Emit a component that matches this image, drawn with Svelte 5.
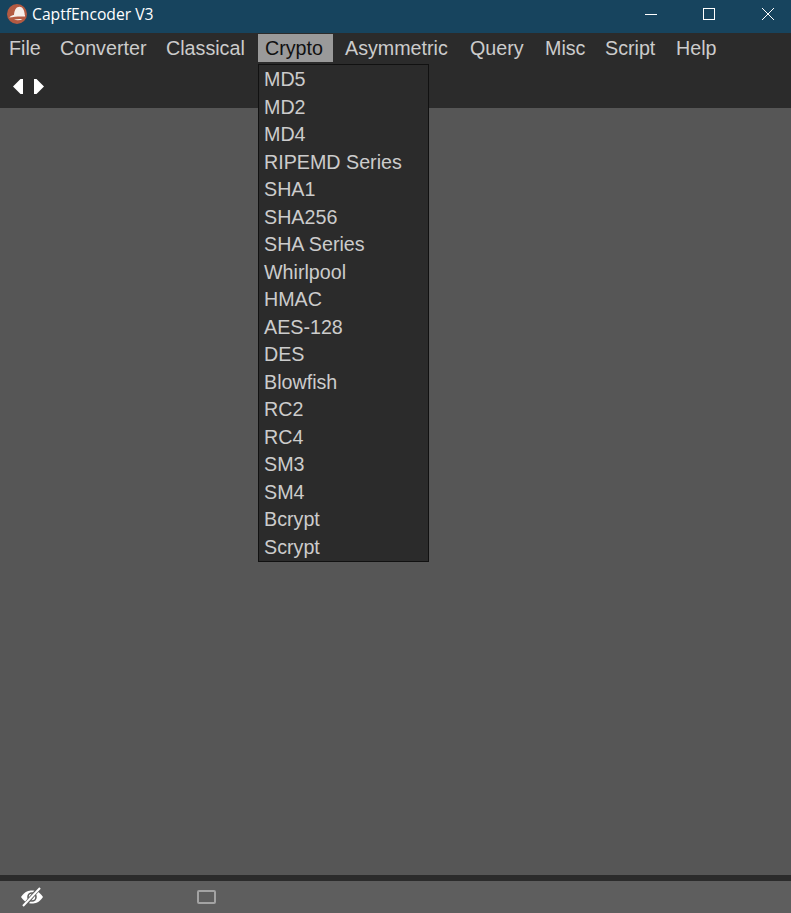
<script>
  const menus = [
    { name: 'File', width: 51 },
    { name: 'Converter', width: 106 },
    { name: 'Classical', width: 99 },
    { name: 'Crypto', width: 80 },
    { name: 'Asymmetric', width: 125 },
    { name: 'Query', width: 75 },
    { name: 'Misc', width: 60 },
    { name: 'Script', width: 71 },
    { name: 'Help', width: 60 }
  ]
  const cryptoItems = ['MD5', 'MD2', 'MD4', 'RIPEMD Series', 'SHA1', 'SHA256', 'SHA Series', 'Whirlpool', 'HMAC', 'AES-128', 'DES', 'Blowfish', 'RC2', 'RC4', 'SM3', 'SM4', 'Bcrypt', 'Scrypt']
  let active = 'Crypto'
</script>

<div class="window">
  <header class="titlebar">
    <svg class="logo" width="20" height="20" viewBox="0 0 20 20">
      <circle cx="10" cy="10" r="10" fill="#b35a42" />
      <path d="M7 10.5 C7.5 5.5 9.5 2.8 12.5 2.8 C15.5 2.8 17.5 6 17.8 11.5 L7 11.5 Z" fill="#f6eeea" />
      <path d="M2.2 13.6 C4 11.6 6 11 8 11 L18 11 L18 12.6 C13 12.2 7 12.6 2.2 13.6 Z" fill="#f6eeea" />
      <path d="M7 15.6 C10 14.8 13 14.8 15.5 15.2 C13 16.4 9.5 16.4 7 15.6 Z" fill="#f6eeea" />
    </svg>
    <span class="title">CaptfEncoder V3</span>
    <div class="controls">
      <svg width="12" height="12" viewBox="0 0 12 12"><path d="M0 6.5 H12" stroke="#fff" stroke-width="1" /></svg>
      <svg width="12" height="12" viewBox="0 0 12 12"><rect x="0.5" y="0.5" width="11" height="11" fill="none" stroke="#fff" stroke-width="1" /></svg>
      <svg class="close" width="12" height="12" viewBox="0 0 12 12"><path d="M0 0 L12 12 M12 0 L0 12" stroke="#fff" stroke-width="1" /></svg>
    </div>
  </header>

  <div class="top">
    <nav class="menubar">
      {#each menus as menu}
        <div class="menu" class:active={menu.name === active} style="width: {menu.width}px">{menu.name}</div>
      {/each}
    </nav>
    <div class="arrows">
      <svg width="10" height="15" viewBox="0 0 10 15"><path d="M10 0 V15 H7.5 L0 7.5 L7.5 0 Z" fill="#fff" /></svg>
      <svg width="10" height="15" viewBox="0 0 10 15"><path d="M0 0 V15 H2.5 L10 7.5 L2.5 0 Z" fill="#fff" /></svg>
    </div>
    <ul class="dropdown">
      {#each cryptoItems as item}
        <li>{item}</li>
      {/each}
    </ul>
  </div>

  <main class="content"></main>

  <footer class="statusbar">
    <svg class="eye" width="24" height="20" viewBox="0 0 24 20">
      <path d="M1 10 C5 4 9 3.5 12 3.5 C15 3.5 19 4 23 10 C19 16 15 16.5 12 16.5 C9 16.5 5 16 1 10 Z" fill="#fff" />
      <circle cx="12" cy="10" r="4" fill="none" stroke="#5e5e5e" stroke-width="1.6" />
      <path d="M20 0 L4 19" stroke="#5e5e5e" stroke-width="4" />
      <path d="M20 1 L3 19" stroke="#fff" stroke-width="2" />
    </svg>
    <span class="panel-toggle"></span>
  </footer>
</div>

<style>
  :global(body) {
    margin: 0;
  }

  .window {
    display: flex;
    flex-direction: column;
    height: 913px;
    background: #565656;
    font-family: "Liberation Sans", Arial, sans-serif;
  }

  .titlebar {
    display: flex;
    align-items: flex-start;
    height: 33px;
    box-sizing: border-box;
    padding: 4px 0 0 7px;
    background: #17445e;
    color: #fff;
  }

  .logo {
    margin-right: 5px;
  }

  .title {
    font-family: "Open Sans", sans-serif;
    font-size: 15.7px;
    line-height: 21px;
  }

  .controls {
    display: flex;
    gap: 46px;
    margin-left: auto;
    margin-right: 17px;
    margin-top: 4px;
  }

  .close {
    margin-left: 1px;
  }

  .top {
    position: relative;
    height: 75px;
    background: #2b2b2b;
  }

  .menubar {
    display: flex;
    padding: 1px 0 0 2px;
  }

  .menu {
    box-sizing: border-box;
    height: 28px;
    padding-left: 7px;
    font-size: 19.7px;
    line-height: 28px;
    color: #cccccc;
  }

  .menu.active {
    background: #9a9a9a;
    color: #111;
    width: 75px !important;
    margin-right: 5px;
  }

  .arrows {
    display: flex;
    gap: 11px;
    padding: 17px 0 0 13px;
  }

  .dropdown {
    position: absolute;
    left: 258px;
    top: 31px;
    z-index: 2;
    box-sizing: border-box;
    width: 171px;
    height: 498px;
    margin: 0;
    padding: 1px 0 0 5px;
    list-style: none;
    background: #2b2b2b;
    border: 1px solid #111;
    color: #cccccc;
    font-size: 19.7px;
  }

  .dropdown li {
    height: 27.5px;
    line-height: 27.5px;
  }

  .content {
    flex: 1;
  }

  .statusbar {
    display: flex;
    align-items: center;
    height: 32px;
    background: #5e5e5e;
    border-top: 6px solid #2b2b2b;
  }

  .eye {
    margin-left: 20px;
  }

  .panel-toggle {
    box-sizing: border-box;
    width: 19px;
    height: 14px;
    margin-left: 153px;
    border: 2px solid #a3a3a3;
    border-radius: 2px;
  }
</style>
